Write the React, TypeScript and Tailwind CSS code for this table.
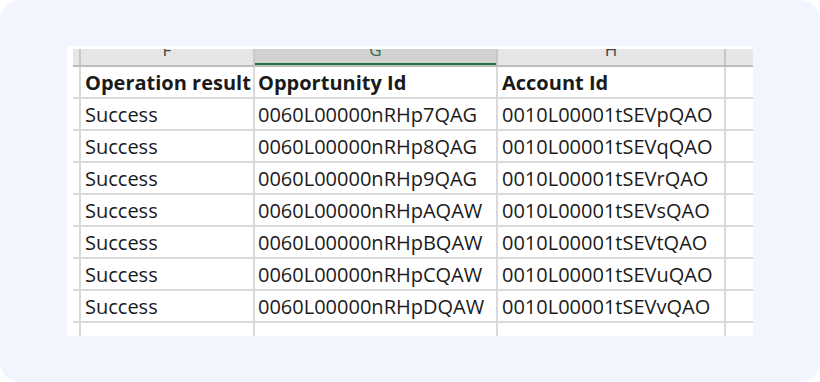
const rows = [
  ['0060L00000nRHp7QAG', '0010L00001tSEVpQAO'],
  ['0060L00000nRHp8QAG', '0010L00001tSEVqQAO'],
  ['0060L00000nRHp9QAG', '0010L00001tSEVrQAO'],
  ['0060L00000nRHpAQAW', '0010L00001tSEVsQAO'],
  ['0060L00000nRHpBQAW', '0010L00001tSEVtQAO'],
  ['0060L00000nRHpCQAW', '0010L00001tSEVuQAO'],
  ['0060L00000nRHpDQAW', '0010L00001tSEVvQAO'],
]

function Row({ a, b, c, bold }: { a: string; b: string; c: string; bold?: boolean }) {
  return (
    <div className={`flex h-[32px] border-b-2 border-[#dadada] pt-[2px] ${bold ? 'font-bold text-[20px]' : 'text-[20px]'}`}>
      <div className="w-[8px] shrink-0 border-r-2 border-[#dadada] -mt-[2px]" />
      <div className="w-[174px] shrink-0 border-r-2 border-[#dadada] -mt-[2px] pt-[2px] pl-[4px] flex items-center">{a}</div>
      <div className="w-[243px] shrink-0 border-r-2 border-[#dadada] -mt-[2px] pt-[2px] pl-[3px] flex items-center">{b}</div>
      <div className="w-[228px] shrink-0 border-r-2 border-[#dadada] -mt-[2px] pt-[2px] pl-[4px] flex items-center">{c}</div>
      <div className="flex-1" />
    </div>
  )
}

export default function App() {
  return (
    <div className="w-[820px] h-[382px] bg-white">
      <div className="w-full h-full rounded-[20px] bg-[#f2f5fd] pt-[46px] pl-[67px]">
        <div
          className="w-[686px] h-[290px] bg-white overflow-hidden pt-[3px] pl-[6px] leading-none text-[#1a1a1a]"
          style={{ fontFamily: '"Open Sans", Lato, sans-serif' }}
        >
          {/* column header strip, letters clipped at the top */}
          <div className="flex h-[18px] bg-[#e6e6e6] border-b-2 border-[#bdbdbd] overflow-hidden text-[17px] text-[#444]">
            <div className="w-[8px] shrink-0 border-r-2 border-[#c8c8c8]" />
            <div className="w-[174px] shrink-0 border-r-2 border-[#c8c8c8] flex justify-center">
              <span className="-mt-[8px]">F</span>
            </div>
            <div className="w-[243px] shrink-0 border-r-2 border-[#c8c8c8] bg-[#d2d2d2] flex justify-center relative">
              <span className="-mt-[8px] text-[#2e6e4e]">G</span>
              <div className="absolute left-0 right-0 bottom-0 h-[2px] bg-[#217346]" />
            </div>
            <div className="w-[228px] shrink-0 border-r-2 border-[#c8c8c8] flex justify-center">
              <span className="-mt-[8px]">H</span>
            </div>
            <div className="flex-1" />
          </div>
          <Row a="Operation result" b="Opportunity Id" c="Account Id" bold />
          {rows.map((r, i) => (
            <Row key={i} a="Success" b={r[0]} c={r[1]} />
          ))}
          <Row a="" b="" c="" />
        </div>
      </div>
    </div>
  )
}
